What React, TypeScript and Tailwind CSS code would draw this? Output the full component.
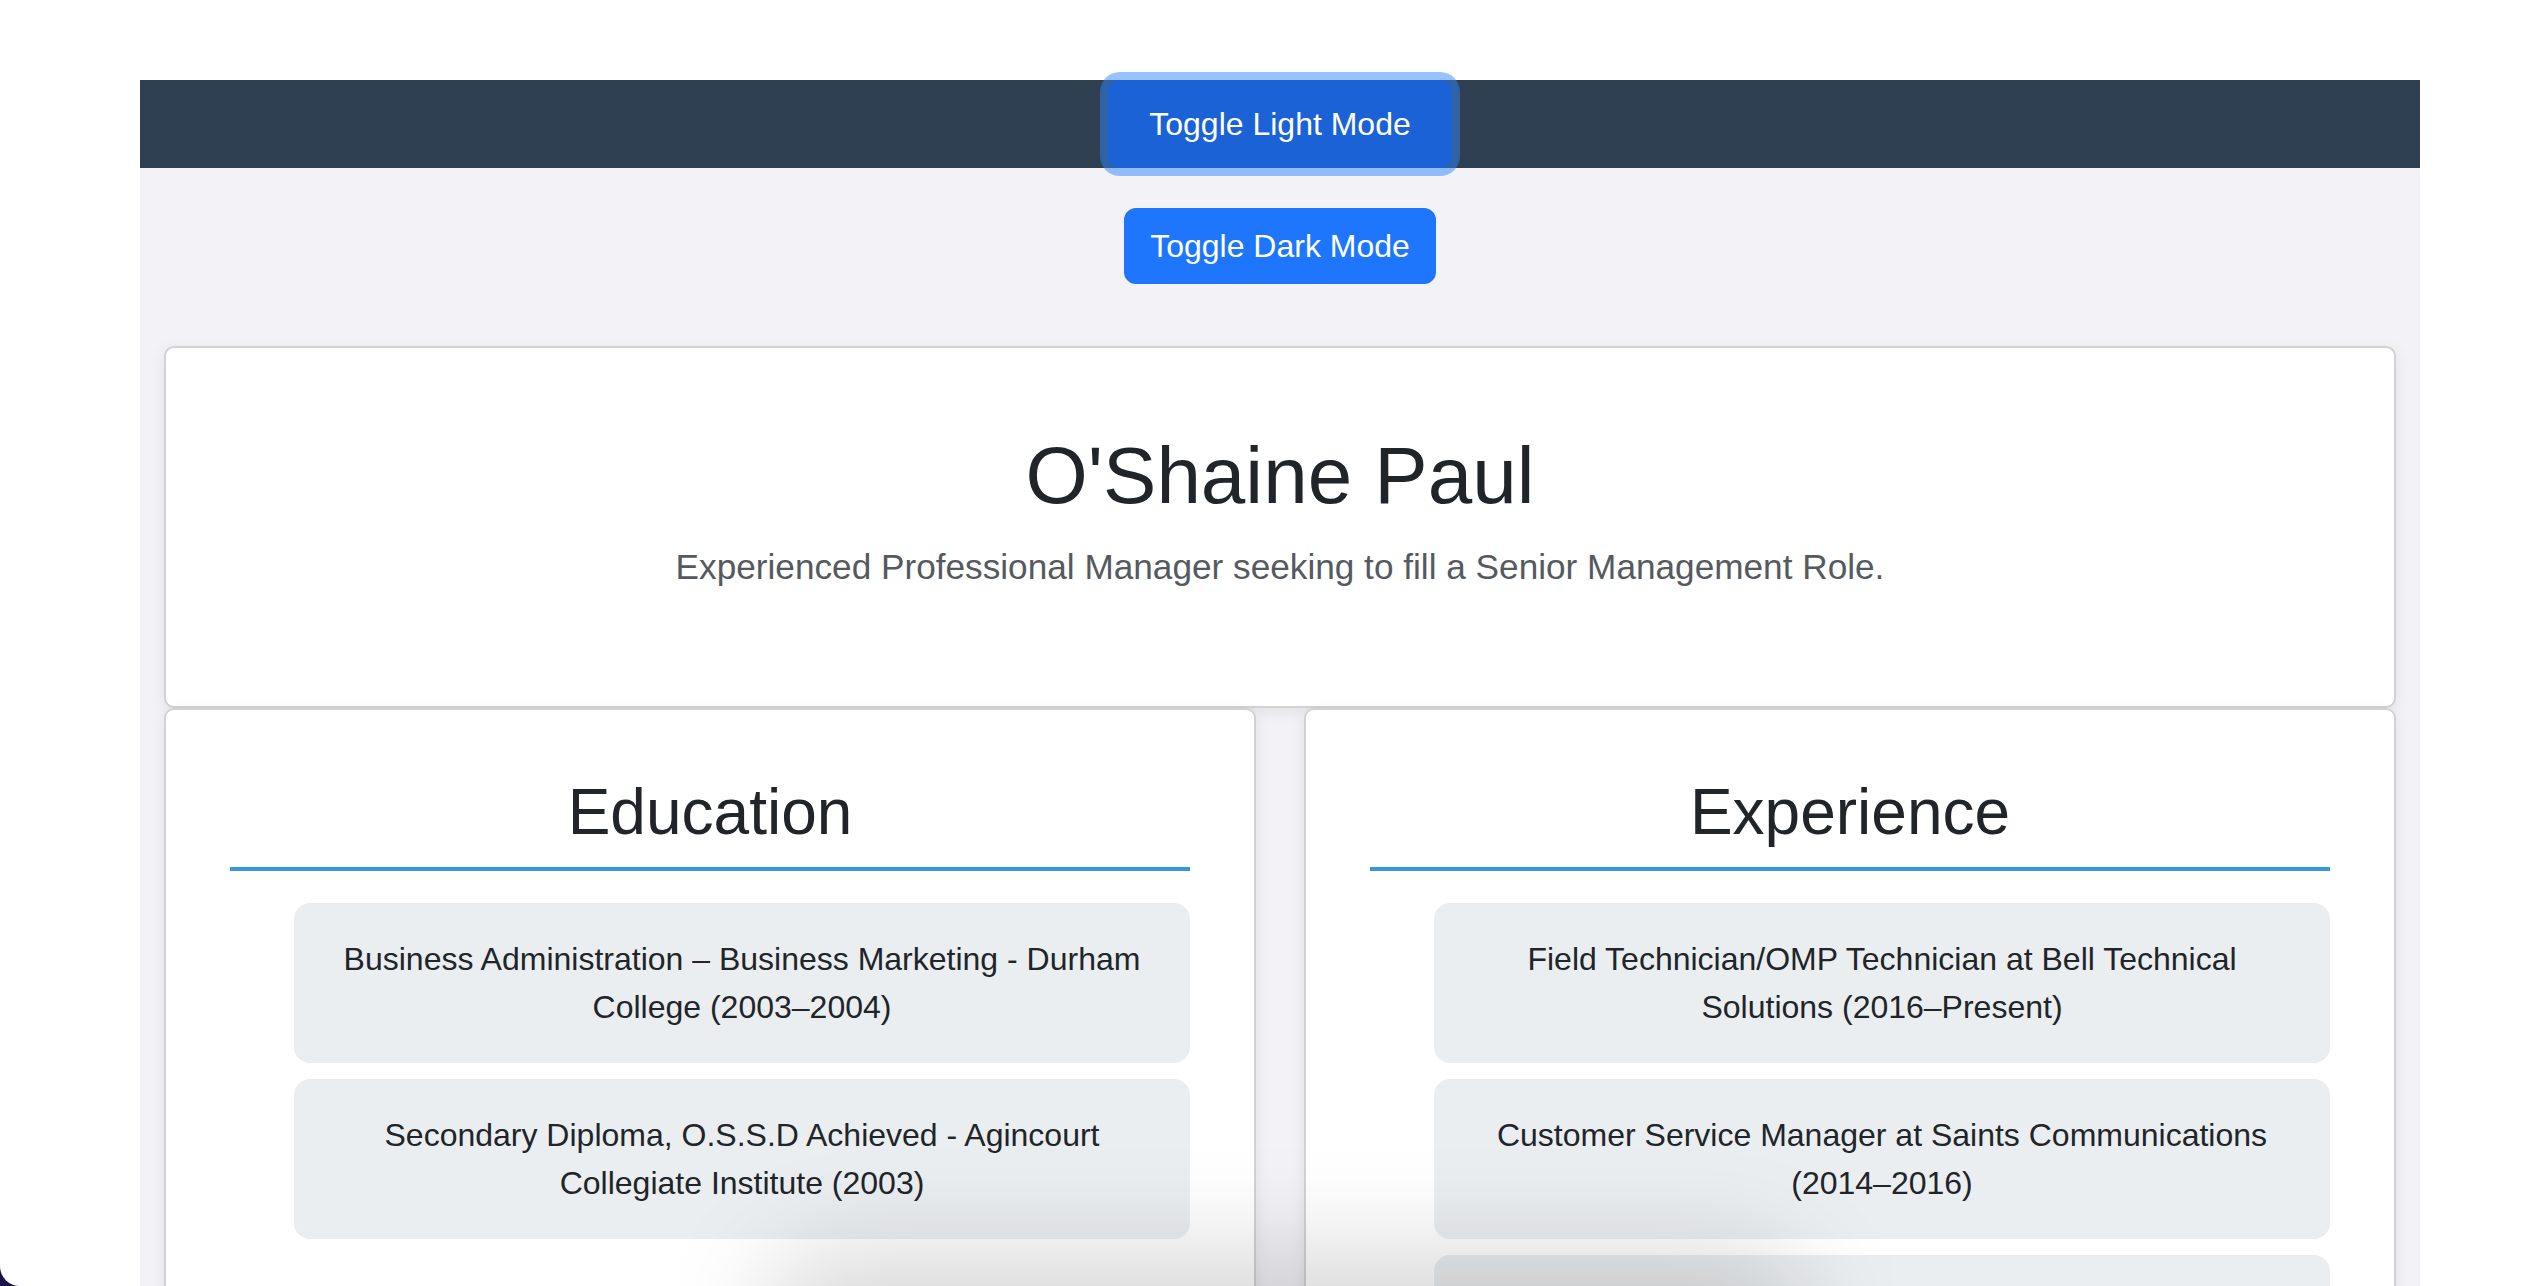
import React from "react";

const education = [
  "Business Administration – Business Marketing - Durham College (2003–2004)",
  "Secondary Diploma, O.S.S.D Achieved - Agincourt Collegiate Institute (2003)",
];

const experience = [
  "Field Technician/OMP Technician at Bell Technical Solutions (2016–Present)",
  "Customer Service Manager at Saints Communications (2014–2016)",
  "",
];

function Section({ title, items }: { title: string; items: string[] }) {
  return (
    <div className="rounded-[10px] border-2 border-[#d2d2d4] bg-white p-[64px] shadow-[0_4px_16px_rgba(0,0,0,0.08)]">
      <h2 className="border-b-4 border-[#3498db] pb-[16px] text-center text-[64px] leading-[77px] font-normal text-[#212529]">
        {title}
      </h2>
      <ul className="mt-[32px] flex flex-col gap-[16px] pl-[64px]">
        {items.map((t, i) => (
          <li
            key={i}
            className="min-h-[160px] rounded-[16px] bg-[#ebeef0] px-[32px] py-[32px] text-center text-[32px] leading-[48px] text-[#212529]"
          >
            {t}
          </li>
        ))}
      </ul>
    </div>
  );
}

export default function App() {
  return (
    <div className="relative h-[1286px] w-[2532px] overflow-hidden bg-white font-['Liberation_Sans',Arial,sans-serif] text-[#212529]">
      <div className="ml-[140px] mt-[80px] w-[2280px] bg-[#f2f2f7] pb-[80px]">
        <nav className="flex h-[88px] justify-center bg-[#2e4052]">
          <button className="h-[88px] rounded-[12px] bg-[#1a62d5] px-[41px] text-[32px] leading-[48px] text-white shadow-[0_0_0_8px_rgba(49,132,253,0.5)]">
            Toggle Light Mode
          </button>
        </nav>
        <div className="flex justify-center pt-[40px]">
          <button className="rounded-[12px] border-2 border-[#1d76fb] bg-[#1d76fb] px-[24px] py-[12px] text-[32px] leading-[48px] text-white">
            Toggle Dark Mode
          </button>
        </div>
        <div className="px-[24px] pt-[62px]">
          <div className="rounded-[10px] border-2 border-[#d2d2d4] bg-white p-[80px] text-center shadow-[0_4px_16px_rgba(0,0,0,0.08)]">
            <h1 className="mb-[16px] text-[80px] leading-[96px] font-normal text-[#212529]">O'Shaine Paul</h1>
            <p className="mb-[32px] text-[35.2px] leading-[54px] text-[#555a5f]">
              Experienced Professional Manager seeking to fill a Senior Management Role.
            </p>
          </div>
          <div className="grid grid-cols-2 gap-[48px]">
            <Section title="Education" items={education} />
            <Section title="Experience" items={experience} />
          </div>
        </div>
      </div>

      {/* soft overlay shadow at the bottom */}
      <div className="pointer-events-none absolute left-[760px] top-[1250px] h-[160px] w-[1050px] rounded-full bg-black/15 blur-[50px]" />

      {/* window corner */}
      <div className="absolute bottom-0 left-0 h-[20px] w-[20px] bg-[#1c1446]">
        <div className="h-full w-full rounded-bl-[20px] bg-white" />
      </div>
    </div>
  );
}
